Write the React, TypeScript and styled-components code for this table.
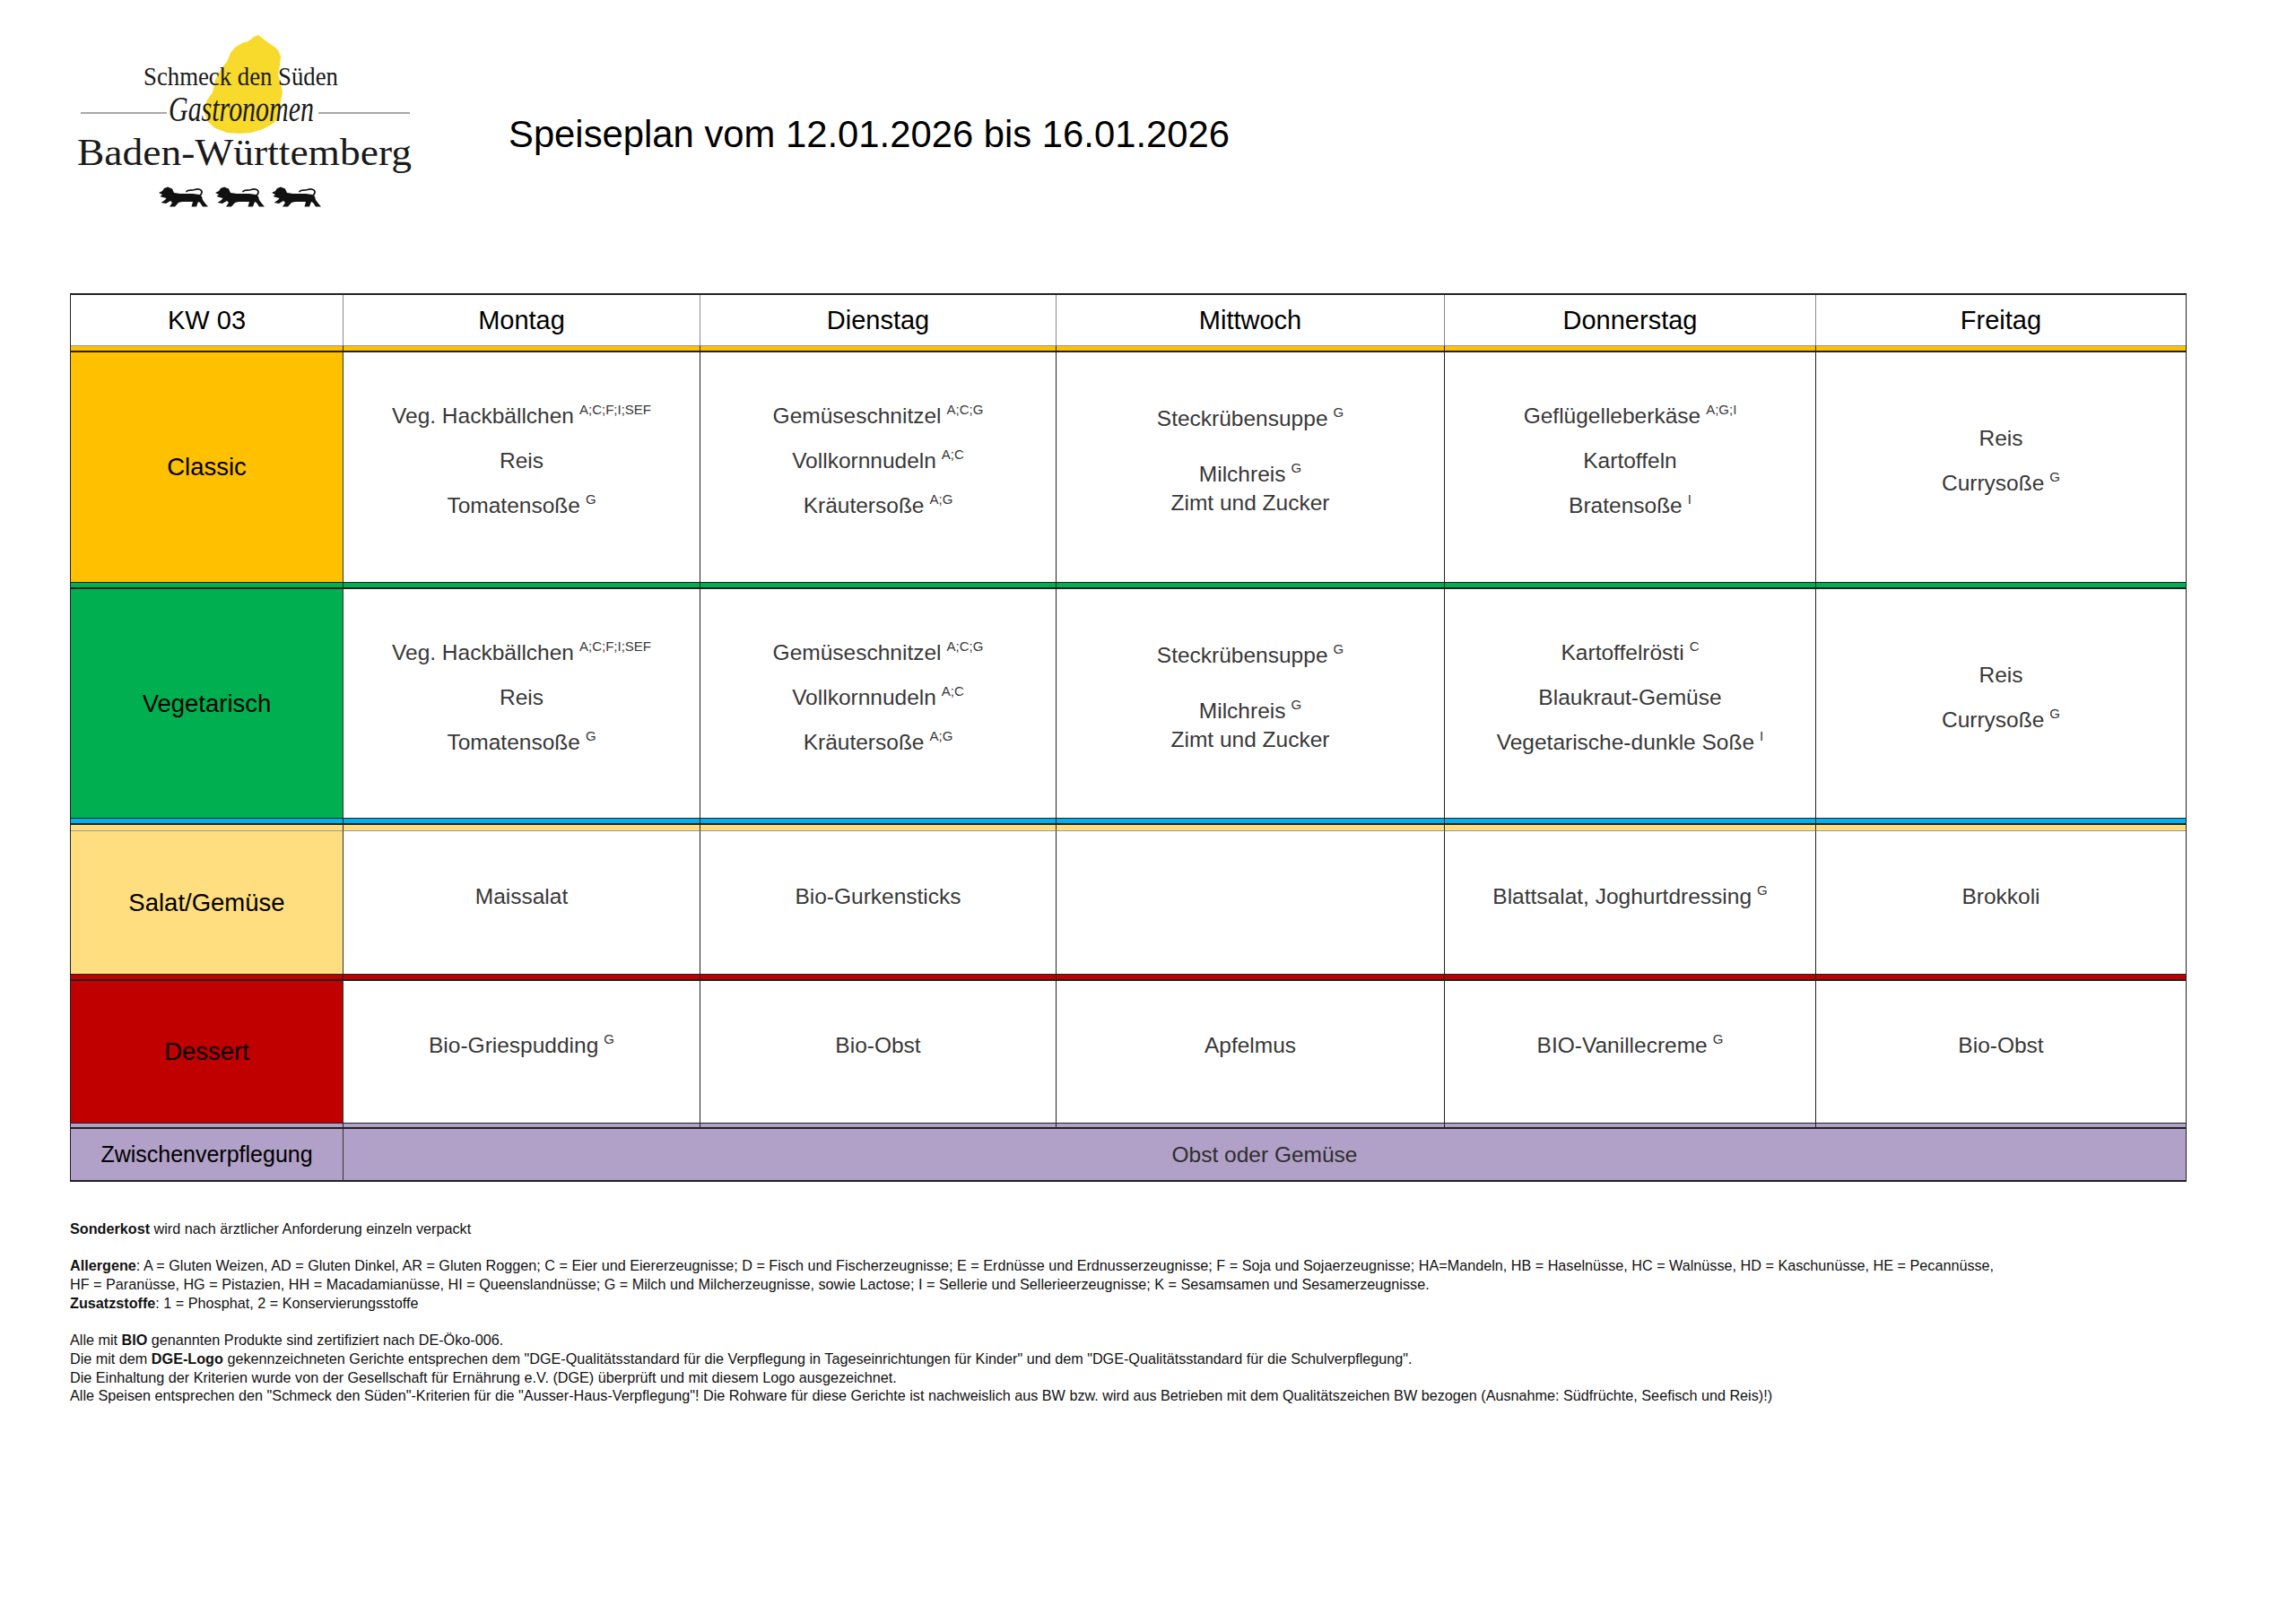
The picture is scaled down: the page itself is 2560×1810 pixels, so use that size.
import React from 'react';
import styled, { createGlobalStyle } from 'styled-components';

// Speiseplan (weekly menu) sheet

type Dish = { text: string; sup?: string; gap?: number };

const COLS = '304px 398px 397px 433px 414px 412px';

const DAYS = ['Montag', 'Dienstag', 'Mittwoch', 'Donnerstag', 'Freitag'];

const hack: Dish[] = [
  { text: 'Veg. Hackbällchen', sup: 'A;C;F;I;SEF' },
  { text: 'Reis' },
  { text: 'Tomatensoße', sup: 'G' },
];
const schnitzel: Dish[] = [
  { text: 'Gemüseschnitzel', sup: 'A;C;G' },
  { text: 'Vollkornnudeln', sup: 'A;C' },
  { text: 'Kräutersoße', sup: 'A;G' },
];
const suppe: Dish[] = [
  { text: 'Steckrübensuppe', sup: 'G' },
  { text: 'Milchreis', sup: 'G', gap: 30 },
  { text: 'Zimt und Zucker', gap: 0 },
];
const curry: Dish[] = [{ text: 'Reis' }, { text: 'Currysoße', sup: 'G' }];

const classic: Dish[][] = [
  hack,
  schnitzel,
  suppe,
  [
    { text: 'Geflügelleberkäse', sup: 'A;G;I' },
    { text: 'Kartoffeln' },
    { text: 'Bratensoße', sup: 'I' },
  ],
  curry,
];

const vegetarisch: Dish[][] = [
  hack,
  schnitzel,
  suppe,
  [
    { text: 'Kartoffelrösti', sup: 'C' },
    { text: 'Blaukraut-Gemüse' },
    { text: 'Vegetarische-dunkle Soße', sup: 'I' },
  ],
  curry,
];

const salat: Dish[][] = [
  [{ text: 'Maissalat' }],
  [{ text: 'Bio-Gurkensticks' }],
  [],
  [{ text: 'Blattsalat, Joghurtdressing', sup: 'G' }],
  [{ text: 'Brokkoli' }],
];

const dessert: Dish[][] = [
  [{ text: 'Bio-Griespudding', sup: 'G' }],
  [{ text: 'Bio-Obst' }],
  [{ text: 'Apfelmus' }],
  [{ text: 'BIO-Vanillecreme', sup: 'G' }],
  [{ text: 'Bio-Obst' }],
];

const GlobalStyle = createGlobalStyle`
  * { box-sizing: border-box; }
  html, body { margin: 0; padding: 0; background: #fff; }
  body {
    font-family: "Liberation Sans", Arial, sans-serif;
    color: #111;
  }
`;

const Page = styled.div`
  width: 2560px;
  min-height: 1810px;
  padding: 36px 0 0 78px;
`;

const Masthead = styled.header`
  display: flex;
  align-items: flex-start;
  height: 200px;
`;

const LogoSvg = styled.svg`
  display: block;
  margin-left: 2px;
  flex: none;
`;

const Title = styled.h1`
  margin: 93px 0 0 97px;
  font-size: 41.8px;
  line-height: 42px;
  font-weight: 400;
  color: #000;
  white-space: nowrap;
`;

const MenuTable = styled.div`
  width: 2360px;
  margin-top: 91px;
  border: 2px solid #222;
  border-left-width: 1px;
  border-right-width: 1px;
`;

const Row = styled.div<{ $h: number }>`
  display: grid;
  grid-template-columns: ${COLS};
  height: ${(p) => p.$h}px;
`;

const HeadCell = styled.div`
  display: flex;
  align-items: center;
  justify-content: center;
  font-size: 29px;
  color: #000;
  border-right: 1px solid #8a8a8a;
  &:last-child {
    border-right: 0;
  }
`;

const StripeRow = styled.div`
  display: grid;
  grid-template-columns: ${COLS};
`;

const Stripe = styled.div<{ $color: string; $h: number; $top?: string; $bottom?: string }>`
  height: ${(p) => p.$h}px;
  background: ${(p) => p.$color};
  border-top: ${(p) => p.$top ?? '1px solid #222'};
  border-bottom: ${(p) => p.$bottom ?? '2px solid #222'};
  border-right: 1px solid #222;
  &:last-child {
    border-right: 0;
  }
`;

const LabelCell = styled.div<{ $bg: string; $size?: number }>`
  display: flex;
  align-items: center;
  justify-content: center;
  background: ${(p) => p.$bg};
  font-size: ${(p) => p.$size ?? 27.5}px;
  color: #000;
  border-right: 1px solid #333;
`;

const DishCell = styled.div`
  display: flex;
  flex-direction: column;
  align-items: center;
  justify-content: center;
  padding-bottom: 14px;
  border-right: 1px solid #222;
  &:last-child {
    border-right: 0;
  }
`;

const SnackCell = styled.div`
  grid-column: 2 / -1;
  display: flex;
  align-items: center;
  justify-content: center;
  background: #b1a0c7;
  font-size: 24.5px;
  color: #2e2e2e;
`;

const DishLine = styled.div<{ $gap?: number }>`
  font-size: 24.5px;
  line-height: 32px;
  color: #383838;
  white-space: nowrap;
  &:not(:first-child) {
    margin-top: ${(p) => p.$gap ?? 18}px;
  }
`;

const Sup = styled.span`
  font-size: 15px;
  vertical-align: 10px;
  line-height: 0;
  margin-left: 6px;
`;

const Notes = styled.div`
  margin-top: 42px;
  font-size: 16.2px;
  line-height: 20.7px;
  color: #111;
  white-space: nowrap;
`;

const NoteGroup = styled.p`
  margin: 0 0 20.7px;
`;

const NoteLine = styled.span`
  display: block;
`;

const Lion = ({ x }: { x: number }) => (
  <g transform={`translate(${x} 172)`}>
    <path
      fill="#111"
      d="M0 7 L4 5 L6 2 L10 0.5 L15 2.5 L17 7 L24 8 L38 8 L45 9 L48 11 L49 15 L52 19 L55 22.5 L49 22.5 L46 18 L44 17 L42 22.5 L36.5 22.5 L38 17 L26 17 L22 18 L18 22.5 L12 22.5 L15 18 L13 16 L8 19 L2.5 18 L7 15 L8.5 13 L4.5 12 L1.5 11 L4 9 Z"
    />
    <path
      fill="none"
      stroke="#111"
      strokeWidth={1.8}
      strokeLinecap="round"
      d="M46 10 C51 5 46 1.5 40 3.5 C36 5 33 3 31 5.5"
    />
  </g>
);

const Logo = () => (
  <LogoSvg width={390} height={200} viewBox="0 0 390 200">
    <polygon
      fill="#f8da2c"
      points="208,3 217,10 227,17 230,20 233,27 232,37 230,47 233,57 235,67 233,77 232,87 230,97 223,103 213,108 200,112 187,113 173,112 160,107 152,100 148,90 150,77 157,67 160,53 167,40 173,33 177,23 182,17 190,12 197,10 203,5"
    />
    <text
      x={80}
      y={59}
      fontFamily="'Liberation Serif', serif"
      fontSize={30}
      textLength={217}
      lengthAdjust="spacingAndGlyphs"
      fill="#1a1a1a"
    >
      Schmeck den Süden
    </text>
    <line x1={10} y1={90} x2={106} y2={90} stroke="#8c8c8c" strokeWidth={1.5} />
    <line x1={275} y1={90} x2={377} y2={90} stroke="#8c8c8c" strokeWidth={1.5} />
    <text
      x={108}
      y={99}
      fontFamily="'Liberation Serif', serif"
      fontStyle="italic"
      fontSize={40}
      textLength={162}
      lengthAdjust="spacingAndGlyphs"
      fill="#1a1a1a"
    >
      Gastronomen
    </text>
    <text
      x={6}
      y={148}
      fontFamily="'Liberation Serif', serif"
      fontSize={42}
      textLength={373}
      lengthAdjust="spacingAndGlyphs"
      fill="#1a1a1a"
    >
      Baden-Württemberg
    </text>
    <Lion x={97} />
    <Lion x={160} />
    <Lion x={223} />
  </LogoSvg>
);

const DishRow = ({
  label,
  bg,
  height,
  cells,
}: {
  label: string;
  bg: string;
  height: number;
  cells: Dish[][];
}) => (
  <Row $h={height}>
    <LabelCell $bg={bg}>{label}</LabelCell>
    {cells.map((dishes, i) => (
      <DishCell key={i}>
        {dishes.map((d, j) => (
          <DishLine key={j} $gap={d.gap}>
            {d.text}
            {d.sup && <Sup>{d.sup}</Sup>}
          </DishLine>
        ))}
      </DishCell>
    ))}
  </Row>
);

const Stripes = ({
  color,
  h = 8,
  top,
  bottom,
}: {
  color: string;
  h?: number;
  top?: string;
  bottom?: string;
}) => (
  <StripeRow>
    {Array.from({ length: 6 }).map((_, i) => (
      <Stripe key={i} $color={color} $h={h} $top={top} $bottom={bottom} />
    ))}
  </StripeRow>
);

export default function App() {
  return (
    <Page>
      <GlobalStyle />
      <Masthead>
        <Logo />
        <Title>Speiseplan vom 12.01.2026 bis 16.01.2026</Title>
      </Masthead>

      <MenuTable>
        <Row $h={56}>
          <HeadCell>KW 03</HeadCell>
          {DAYS.map((d) => (
            <HeadCell key={d}>{d}</HeadCell>
          ))}
        </Row>
        <Stripes color="#ffc000" top="1px solid #999" />
        <DishRow label="Classic" bg="#ffc000" height={256} cells={classic} />
        <Stripes color="#00b050" />
        <DishRow label="Vegetarisch" bg="#00b050" height={255} cells={vegetarisch} />
        <Stripes color="#00b0f0" />
        <Stripes color="#ffde7f" h={7} top="0" bottom="1px solid #999" />
        <DishRow label="Salat/Gemüse" bg="#ffde7f" height={159} cells={salat} />
        <Stripes color="#c00000" />
        <DishRow label="Dessert" bg="#c00000" height={158} cells={dessert} />
        <Stripes color="#b1a0c7" h={7} />
        <Row $h={57}>
          <LabelCell $bg="#b1a0c7" $size={25}>
            Zwischenverpflegung
          </LabelCell>
          <SnackCell>Obst oder Gemüse</SnackCell>
        </Row>
      </MenuTable>

      <Notes>
        <NoteGroup>
          <b>Sonderkost</b> wird nach ärztlicher Anforderung einzeln verpackt
        </NoteGroup>
        <NoteGroup>
          <NoteLine>
            <b>Allergene</b>: A = Gluten Weizen, AD = Gluten Dinkel, AR = Gluten Roggen; C = Eier
            und Eiererzeugnisse; D = Fisch und Fischerzeugnisse; E = Erdnüsse und
            Erdnusserzeugnisse; F = Soja und Sojaerzeugnisse; HA=Mandeln, HB = Haselnüsse, HC =
            Walnüsse, HD = Kaschunüsse, HE = Pecannüsse,
          </NoteLine>
          <NoteLine>
            HF = Paranüsse, HG = Pistazien, HH = Macadamianüsse, HI = Queenslandnüsse; G = Milch und
            Milcherzeugnisse, sowie Lactose; I = Sellerie und Sellerieerzeugnisse; K = Sesamsamen
            und Sesamerzeugnisse.
          </NoteLine>
          <NoteLine>
            <b>Zusatzstoffe</b>: 1 = Phosphat, 2 = Konservierungsstoffe
          </NoteLine>
        </NoteGroup>
        <NoteGroup>
          <NoteLine>
            Alle mit <b>BIO</b> genannten Produkte sind zertifiziert nach DE-Öko-006.
          </NoteLine>
          <NoteLine>
            Die mit dem <b>DGE-Logo</b> gekennzeichneten Gerichte entsprechen dem
            "DGE-Qualitätsstandard für die Verpflegung in Tageseinrichtungen für Kinder" und dem
            "DGE-Qualitätsstandard für die Schulverpflegung".
          </NoteLine>
          <NoteLine>
            Die Einhaltung der Kriterien wurde von der Gesellschaft für Ernährung e.V. (DGE)
            überprüft und mit diesem Logo ausgezeichnet.
          </NoteLine>
          <NoteLine>
            Alle Speisen entsprechen den "Schmeck den Süden"-Kriterien für die
            "Ausser-Haus-Verpflegung"! Die Rohware für diese Gerichte ist nachweislich aus BW bzw.
            wird aus Betrieben mit dem Qualitätszeichen BW bezogen (Ausnahme: Südfrüchte, Seefisch
            und Reis)!)
          </NoteLine>
        </NoteGroup>
      </Notes>
    </Page>
  );
}
